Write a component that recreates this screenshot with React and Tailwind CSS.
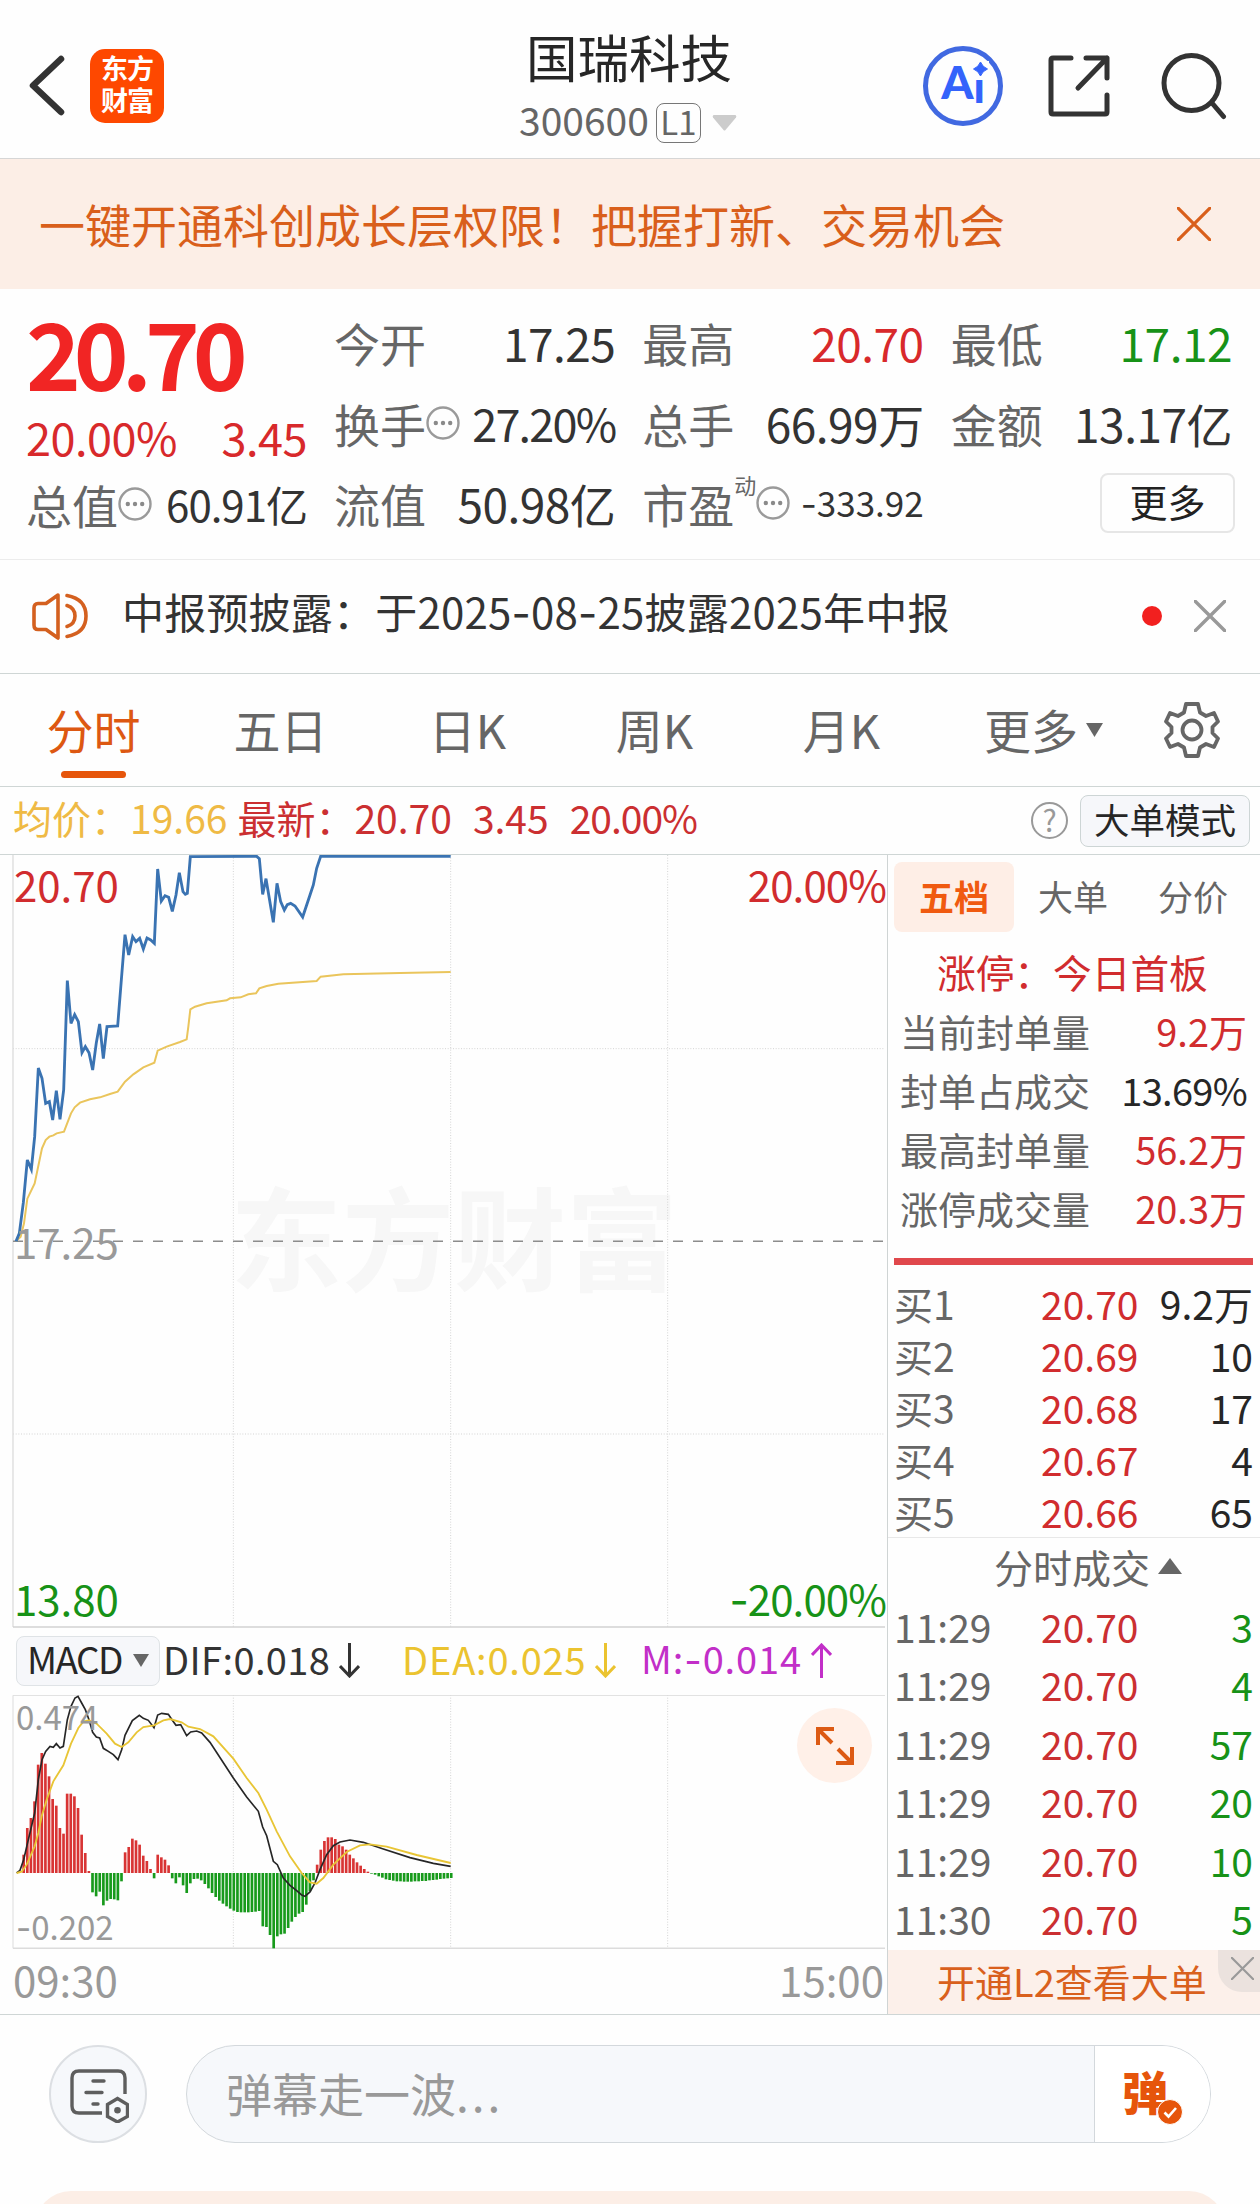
import React from 'react';
import clsx from 'clsx';

const DETAILS = [
  { label: '今开', value: '17.25' },
  { label: '最高', value: '20.70', color: 'text-[#d8292b]' },
  { label: '最低', value: '17.12', color: 'text-[#179217]' },
  { label: '换手', value: '27.20%', more: true },
  { label: '总手', value: '66.99万' },
  { label: '金额', value: '13.17亿' },
  { label: '流值', value: '50.98亿' },
];

const TABS = ['分时', '五日', '日K', '周K', '月K'];

const LIMIT_ROWS = [
  { label: '当前封单量', value: '9.2万', red: true },
  { label: '封单占成交', value: '13.69%' },
  { label: '最高封单量', value: '56.2万', red: true },
  { label: '涨停成交量', value: '20.3万', red: true },
];

const BUYS = [
  ['买1', '20.70', '9.2万'],
  ['买2', '20.69', '10'],
  ['买3', '20.68', '17'],
  ['买4', '20.67', '4'],
  ['买5', '20.66', '65'],
];

const TRADES = [
  ['11:29', '20.70', '3'],
  ['11:29', '20.70', '4'],
  ['11:29', '20.70', '57'],
  ['11:29', '20.70', '20'],
  ['11:29', '20.70', '10'],
  ['11:30', '20.70', '5'],
];

// chart data is kept in a 3x space, the svg viewBox scales it down
const PRICE = '48,1204 58,1180 70,1088 82,960 94,988 104,890 115,684 126,715 137,790 148,785 158,840 169,752 180,838 191,750 202,422 213,550 224,524 235,545 246,638 256,620 267,638 278,690 289,608 299,552 310,656 321,560 353,558 364,420 375,284 386,345 398,290 408,305 419,295 430,327 441,294 452,300 463,310 473,87 484,183 495,167 506,172 517,214 528,165 538,98 549,155 556,163 562,160 571,50 770,49 778,56 788,163 798,116 820,247 831,130 842,185 853,210 862,194 872,190 885,198 908,231 930,165 940,135 950,85 962,49 1352,49';
const AVG = '48,1204 62,1190 72,1150 82,1076 104,1030 126,925 137,900 148,890 160,886 170,880 192,875 213,820 224,802 240,788 270,778 300,772 330,762 353,755 375,725 400,703 430,682 463,668 473,632 500,620 540,606 560,598 565,560 571,508 585,500 620,490 680,481 690,475 722,472 745,463 768,460 778,445 800,438 835,431 950,423 962,410 1030,403 1200,399 1352,396';
const DIF = '50,820 60,812 71,780 85,720 104,640 115,540 126,480 137,455 150,440 160,443 169,432 180,445 190,440 202,360 213,320 225,295 234,290 245,310 256,330 267,360 278,398 289,412 299,415 310,446 325,455 340,465 354,480 365,450 375,407 397,363 418,347 430,356 445,362 462,384 473,346 485,341 505,344 517,362 528,377 542,375 560,408 572,397 590,394 605,400 630,428 700,535 740,592 775,635 788,682 800,708 820,785 832,795 850,835 870,857 890,873 905,886 915,890 930,877 945,850 960,810 980,765 1000,738 1020,727 1050,721 1090,728 1150,748 1230,774 1300,791 1352,800';
const DEA = '50,820 65,816 80,795 104,740 115,700 125,650 140,600 160,545 190,497 213,432 235,385 250,366 267,362 290,372 320,402 345,432 365,442 385,428 410,398 430,382 462,377 490,362 510,358 545,368 565,381 600,388 640,410 700,477 740,535 775,580 800,630 830,695 870,770 905,820 930,848 950,852 970,835 1000,795 1040,757 1080,737 1110,734 1160,741 1250,766 1352,790';
const BARS = [
  55, 135, 165, 215, 325, 360, 328, 290, 222, 202, 135, 118, 238, 238, 230, 195, 115, 60, 6,
  -58, -70, -56, -97, -83, -78, -79, -82, -25,
  62, 78, 103, 98, 85, 52, 36, 12, -16, 55, 47, 40, 23,
  -16, -31, -13, -37, -60, -31, -18, -17, -22, -33, -46, -60, -72, -83, -92, -100, -107, -113,
  -117, -118, -118, -118, -117, -116, -114,
  -160, -162, -186, -226, -190, -184, -182, -165, -146, -132, -122, -117, -95, -55, -22,
  25, 70, 96, 107, 107, 102, 85, 80, 70, 55, 44, 32, 22, 12, 4,
  -2, -5, -10, -14, -19, -21, -23, -25, -25, -26, -26, -26, -25, -25, -24, -24, -22, -21, -20, -18, -17, -16, -15,
];
const GRID_X = [700, 1352, 2003];

// Inter's hyphen is wide enough to read as a minus next to the figures
const Dash = () => <span className="font-[Inter]">-</span>;

const MoreDots = () => (
  <svg className="h-[34px] w-[34px] shrink-0" viewBox="0 0 34 34" fill="none">
    <circle cx="17" cy="17" r="15.5" stroke="#9a9a9a" strokeWidth="2.4" />
    <circle cx="9.8" cy="17" r="2.2" fill="#8a8a8a" />
    <circle cx="17" cy="17" r="2.2" fill="#8a8a8a" />
    <circle cx="24.2" cy="17" r="2.2" fill="#8a8a8a" />
  </svg>
);

const Cross = ({ className, width = 2 }) => (
  <svg className={className} viewBox="0 0 32 32" fill="none" stroke="currentColor" strokeWidth={width} strokeLinecap="round">
    <path d="M1 1 31 31M31 1 1 31" />
  </svg>
);

const Arrow = ({ up }) => (
  <svg className={clsx('h-[35px] w-[21px] shrink-0', up && 'rotate-180')} viewBox="0 0 21 35" fill="none" stroke="currentColor" strokeWidth="3">
    <path d="M10.5 0V33M1 23 10.5 33 20 23" />
  </svg>
);

const Header = () => (
  <header className="flex h-[159px] items-center border-b border-[#d6d6d6] pl-[28px] pr-[33px]">
    <div className="flex w-[491px] items-center pt-[13px]">
      <svg className="h-[61px] w-[37px]" viewBox="0 0 37 61" fill="none" stroke="#333" strokeWidth="6.5" strokeLinecap="round" strokeLinejoin="round">
        <path d="M33 4 5 30.5 33 57" />
      </svg>
      <div className="ml-[25px] flex h-[74px] w-[74px] flex-col items-center rounded-[15px] bg-[#fe4800] pt-[3px] text-[27px] font-bold leading-[32px] tracking-[-1px] text-white">
        <span>东方</span>
        <span>财富</span>
      </div>
    </div>
    <div className="flex flex-1 flex-col self-stretch pt-[30px]">
      <h1 className="pl-[7px] text-[51.5px] leading-none text-[#262626]">国瑞科技</h1>
      <div className="mt-[21px] flex h-[40px] items-center text-[#666]">
        <span className="pb-[7px] text-[39px] leading-none">300600</span>
        <span className="ml-[7px] flex h-[40px] w-[45px] items-center justify-center rounded-[8px] border-[1.5px] border-[#777] pb-[3px] text-[33px] leading-none">L1</span>
        <svg className="ml-[11px] h-[16px] w-[25px]" viewBox="0 0 25 16">
          <path d="M1.5 0h22q1.5 1 .5 2.5L13.5 15q-1 1-2 0L1 2.5Q0 1 1.5 0" fill="#ccc" />
        </svg>
      </div>
    </div>
    <div className="flex items-center pt-[13px]">
      <div className="flex h-[80px] w-[80px] items-center justify-center rounded-full border-[5px] border-[#4169e1] font-[Lato] text-[46px] font-black leading-none text-[#3463fb]">
        <span className="pb-[7px]">A</span>
        <span className="relative text-[44px]">
          i
          <svg className="absolute left-[-1px] top-[-3px] h-[17px] w-[17px] bg-[#fefefe]" viewBox="0 0 17 17">
            <path d="M8.5 1Q10.5 6 15.5 8Q10.5 10 8.5 15Q6.5 10 1.5 8Q6.5 6 8.5 1" fill="#3463fb" stroke="#3463fb" />
          </svg>
        </span>
      </div>
      <svg className="ml-[44px] h-[64px] w-[64px]" viewBox="0 0 64 64" fill="none" stroke="#333" strokeWidth="5" strokeLinecap="round" strokeLinejoin="round">
        <path d="M24 4H6Q4 4 4 6V58Q4 60 6 60H58Q60 60 60 58V41M39 4H60V24M60 4 31 34" />
      </svg>
      <svg className="ml-[48px] h-[68px] w-[68px]" viewBox="0 0 68 68" fill="none" stroke="#333" strokeWidth="5" strokeLinecap="round">
        <circle cx="32.5" cy="31" r="27.5" />
        <path d="M53 51 64.5 64.5" />
      </svg>
    </div>
  </header>
);

const Quote = () => (
  <section className="flex h-[271px] gap-[29px] border-b border-[#ececec] pl-[28px] pr-[28px] pt-[13px] text-[46px] leading-none">
    <div className="w-[279px] text-[#d8292b]">
      <div className="-ml-[2px] flex h-[97px] items-center text-[93px] font-bold tracking-[-7px] text-[#f12524]">20.70</div>
      <div className="-ml-[2px] flex h-[75px] items-center justify-between pb-[1px] text-[45px] tracking-[-0.5px]">
        <span>20.00%</span>
        <span>3.45</span>
      </div>
      <div className="flex h-[59px] items-center">
        <span className="-ml-[2px] text-[#666]">总值</span>
        <MoreDots />
        <span className="ml-auto text-[42px] tracking-[-1px] text-[#333]">60.91亿</span>
      </div>
    </div>
    <div className="grid flex-1 grid-cols-3 content-start gap-x-[29px]">
      {DETAILS.map(({ label, value, color, more }) => (
        <div key={label} className="flex h-[80.5px] items-center whitespace-nowrap">
          <span className="-ml-[2px] text-[#666]">{label}</span>
          {more && <MoreDots />}
          <span className={clsx('ml-auto', color || 'text-[#333]', more ? 'text-[45px] tracking-[-1.8px]' : 'tracking-[-0.5px]')}>{value}</span>
        </div>
      ))}
      <div className="flex h-[80.5px] items-center">
        <span className="-ml-[2px] text-[#666]">市盈</span>
        <span className="self-start pt-[10px] text-[22px] text-[#666]">动</span>
        <MoreDots />
        <span className="ml-auto text-[35px] text-[#333]"><Dash />333.92</span>
      </div>
      <div className="flex h-[80.5px] items-center">
        <button className="-mr-[3px] ml-auto flex h-[60px] w-[135px] items-center justify-center rounded-[8px] border-2 border-[#e6e6e6] pb-[5px] text-[38px] text-[#222]">更多</button>
      </div>
    </div>
  </section>
);

const Notice = () => (
  <div className="flex h-[114px] items-center border-b border-[#cfd6d5] pb-[2px] pl-[32px] pr-[34px]">
    <svg className="h-[48px] w-[56px]" viewBox="0 0 56 48" fill="none" stroke="#d4601f" strokeWidth="3.6" strokeLinecap="round" strokeLinejoin="round">
      <path d="M26 3 14 11.5H6Q2 11.5 2 16V33Q2 37.5 6 37.5H14L26 46Z" />
      <path d="M35 13.5Q43 16 43 24T35 34.5M35 3.5Q54 7 54 24T35 44.5" />
    </svg>
    <span className="ml-[34px] pb-[7px] text-[42px] leading-none tracking-[0.2px] text-[#333]">中报预披露：于2025<Dash />08<Dash />25披露2025年中报</span>
    <span className="ml-auto h-[20px] w-[20px] rounded-full bg-[#f2201f]" />
    <Cross className="ml-[32px] h-[32px] w-[32px] text-[#999]" width={3.4} />
  </div>
);

const Tabs = () => (
  <nav className="flex h-[113px] items-center border-b border-[#cfd6d5] text-[47px] leading-none text-[#666]">
    {TABS.map((tab, i) => (
      <div key={tab} className={clsx('relative flex h-full w-[187px] items-center justify-center pb-[4px]', i === 0 && 'text-[#dd5812]')}>
        {tab}
        {i === 0 && <span className="absolute bottom-[8px] h-[7px] w-[65px] rounded-full bg-[#e6550b]" />}
      </div>
    ))}
    <span className="ml-[49px] pb-[4px]">更多</span>
    <svg className="ml-[8px] h-[14px] w-[17px]" viewBox="0 0 17 14"><path d="M0 0H17L8.5 14Z" fill="#666" /></svg>
    <svg className="ml-[61px] h-[58px] w-[56px]" viewBox="0 0 56 58" fill="none" stroke="#666" strokeWidth="3.8" strokeLinejoin="round">
      <path d="M22 3H34L36 11.5 42 15 50 12 54 20.5 48.5 26V32L54 37.5 50 46 42 43 36 46.5 34 55H22L20 46.5 14 43 6 46 2 37.5 7.5 32V26L2 20.5 6 12 14 15 20 11.5Z" />
      <circle cx="28" cy="29" r="9.5" />
    </svg>
  </nav>
);

const InfoBar = () => (
  <div className="flex h-[68px] items-center border-b border-[#cfd6d5] pl-[13px] pr-[10px] text-[39px] leading-none">
    <span className="pb-[7px] text-[#efba45]">均价：19.66</span>
    <div className="ml-[10px] flex gap-[21px] pb-[7px] text-[#cb2f31]">
      <span>最新：20.70</span>
      <span>3.45</span>
      <span className="tracking-[-1px]">20.00%</span>
    </div>
    <span className="ml-auto flex h-[37px] w-[37px] items-center justify-center rounded-full border-[2.5px] border-[#999] pb-[3px] text-[30px] text-[#999]">?</span>
    <button className="ml-[12px] flex h-[52px] w-[170px] items-center justify-center rounded-[8px] border border-[#cdd5d5] bg-[#f6f7fa] pb-[4px] text-[35.5px] text-[#262626]">大单模式</button>
  </div>
);

const PriceChart = () => (
  <div className="relative h-[773px] text-[42px] leading-none">
    <div className="absolute left-[230px] top-[323px] text-[112px] font-bold text-[#f7f7f7]">东方财富</div>
    <svg className="absolute inset-0 h-[773px] w-[887px]" viewBox="0 45 2661 2319" fill="none">
      <g stroke="#d4d4d4" strokeWidth="3" strokeDasharray="3 5">
        {GRID_X.map((x) => <path key={x} d={`M${x} 45V2361`} />)}
        <path d="M39 626H2655M39 1782H2655" />
      </g>
      <path d="M39 45V2361" stroke="#dcdcdc" strokeWidth="4" />
      <path d="M39 2361H2655" stroke="#d2d2d2" strokeWidth="5" />
      <path d="M39 1204H2655" stroke="#8c8c8c" strokeWidth="4.5" strokeDasharray="30 30" />
      <polyline points={AVG} stroke="#eac55c" strokeWidth="6" />
      <polyline points={PRICE} stroke="#3a73b2" strokeWidth="8.5" />
    </svg>
    <span className="absolute left-[14px] top-[8px] text-[#d12c2e]">20.70</span>
    <span className="absolute right-[1px] top-[8px] tracking-[-0.9px] text-[#d12c2e]">20.00%</span>
    <span className="absolute left-[14px] top-[365px] text-[#999]">17.25</span>
    <span className="absolute left-[14px] top-[722px] text-[#179217]">13.80</span>
    <span className="absolute right-[1px] top-[722px] tracking-[-0.9px] text-[#179217]"><Dash />20.00%</span>
  </div>
);

const MacdBar = () => (
  <div className="flex h-[67px] items-center pb-[2px] pl-[16px] text-[38px] leading-none text-[#333]">
    <button className="flex h-[50px] w-[144px] items-center rounded-[8px] border border-[#dfe3e6] bg-[#f6f7fa] pl-[10px] text-[#262626]">
      <span className="pb-[4px] text-[37px] tracking-[-1.6px]">MACD</span>
      <svg className="ml-[11px] h-[13px] w-[16px] shrink-0" viewBox="0 0 16 13"><path d="M0 0H16L8 13Z" fill="#666" /></svg>
    </button>
    <div className="flex w-[240px] items-center gap-[9px] pl-[3px] tracking-[0.4px]">
      <span className="pb-[4px]">DIF:0.018</span><Arrow />
    </div>
    <div className="flex w-[241px] items-center gap-[9px] pl-[2px] tracking-[0.8px] text-[#ebc32f]">
      <span className="pb-[4px]">DEA:0.025</span><Arrow />
    </div>
    <div className="flex items-center gap-[9px] tracking-[0.9px] text-[#c22fc8]">
      <span className="pb-[4px]">M:<Dash />0.014</span><Arrow up />
    </div>
  </div>
);

const MacdChart = () => (
  <div className="relative h-[254px] text-[33px] leading-none text-[#999]">
    <svg className="absolute inset-0 h-[254px] w-[887px]" viewBox="0 286 2661 762" fill="none">
      <g stroke="#d4d4d4" strokeWidth="3" strokeDasharray="3 5">
        {GRID_X.map((x) => <path key={x} d={`M${x} 286V1046`} />)}
      </g>
      <path d="M39 1046V287H2655" stroke="#dcdcdc" strokeWidth="3" />
      <path d="M39 1046H2655" stroke="#dcdcdc" strokeWidth="5" />
      {BARS.map((v, i) => (
        <rect key={i} x={67 + i * 10.87} y={v > 0 ? 820 - v : 820} width="8" height={Math.abs(v)} fill={v > 0 ? '#d83434' : '#179a1b'} />
      ))}
      <polyline points={DIF} stroke="#262626" strokeWidth="5" />
      <polyline points={DEA} stroke="#e8c535" strokeWidth="5.5" />
    </svg>
    <span className="absolute left-[16px] top-[5px]">0.474</span>
    <span className="absolute left-[16px] top-[215px]"><Dash />0.202</span>
    <span className="absolute left-[797px] top-[13px] flex h-[75px] w-[75px] items-center justify-center rounded-full bg-[#fff0e8]">
      <svg className="h-[38px] w-[38px]" viewBox="0 0 38 38" fill="none" stroke="#dc5a14" strokeWidth="4">
        <path d="M2 18V2H18M2 2 16 16M36 20V36H20M36 36 22 22" />
      </svg>
    </span>
  </div>
);

const OrderPanel = () => (
  <aside className="flex w-[373px] flex-col border-l border-[#cfd4d4] leading-none">
    <div className="flex pl-[6px] pt-[7px] text-[35px] text-[#666]">
      <div className="flex h-[70px] w-[120px] items-center justify-center rounded-[8px] bg-[#feeee6] pb-[3px] font-bold text-[#f05a10]">五档</div>
      <div className="flex h-[70px] w-[118px] items-center justify-center pb-[3px]">大单</div>
      <div className="flex h-[70px] w-[122px] items-center justify-center pb-[3px]">分价</div>
    </div>
    <div className="mt-[10px] flex h-[59px] items-center pl-[49px] text-[38.7px] text-[#d12c2e]">涨停：今日首板</div>
    {LIMIT_ROWS.map(({ label, value, red }) => (
      <div key={label} className="flex h-[59px] items-center justify-between pl-[12px] pr-[13px] text-[38px]">
        <span className="text-[#666]">{label}</span>
        <span className={red ? 'text-[#d12c2e]' : 'tracking-[-0.7px] text-[#262626]'}>{value}</span>
      </div>
    ))}
    <div className="ml-[6px] mt-[21px] h-[7px] w-[359px] bg-[#e0484c]" />
    <div className="mt-[12px]">
      {BUYS.map(([label, price, vol]) => (
        <div key={label} className="flex h-[52px] items-center pl-[6px] pr-[7px] text-[39px]">
          <span className="w-[147px] text-[#666]">{label}</span>
          <span className="text-[#d12c2e]">{price}</span>
          <span className="ml-auto text-[#262626]">{vol}</span>
        </div>
      ))}
    </div>
    <div className="flex h-[60px] items-center justify-center gap-[8px] border-t border-[#e8e8e8] pl-[28px] text-[39px] text-[#666]">
      <span className="pb-[3px]">分时成交</span>
      <svg className="-mt-[4px] h-[16px] w-[24px]" viewBox="0 0 24 16"><path d="M12 0 24 16H0Z" fill="#666" /></svg>
    </div>
    {TRADES.map(([time, price, vol], i) => (
      <div key={i} className="flex h-[58.5px] items-center pl-[6px] pr-[7px] text-[39px]">
        <span className="w-[147px] text-[#666]">{time}</span>
        <span className="text-[#cb2f31]">{price}</span>
        <span className="ml-auto text-[#179217]">{vol}</span>
      </div>
    ))}
    <div className="relative mt-[2px] flex flex-1 items-center bg-[#fcf0ea] pb-[3px] pl-[49px] text-[38px] text-[#d9601d]">
      开通L2查看大单
      <span className="absolute right-0 top-0 flex h-[42px] w-[42px] items-center justify-center rounded-bl-[24px] bg-[#ebe2de] pb-[5px] pl-[6px]">
        <Cross className="h-[23px] w-[23px] text-[#999]" width={3} />
      </span>
    </div>
  </aside>
);

const CommentBar = () => (
  <footer className="flex flex-col border-t border-[#cfd6d5] pt-[30px]">
    <div className="flex pl-[49px]">
      <div className="flex h-[98px] w-[98px] items-center justify-center rounded-full border-2 border-[#dcdfe3] bg-[#f6f8fb]">
        <svg className="h-[58px] w-[62px]" viewBox="0 0 62 58" fill="none" stroke="#5e5e5e" strokeWidth="3.4">
          <path d="M35 48H12Q5 48 5 41V13Q5 6 12 6H51Q58 6 58 13V29" />
          <path d="M26 16H37M19 27.500H35M26 39H31" strokeLinecap="round" />
          <path d="M50.500 33.500 60.500 39.500V51.500L50.500 57 40.500 51.500V39.500Z" />
          <circle cx="50.500" cy="45.300" r="3.300" fill="#5e5e5e" stroke="none" />
        </svg>
      </div>
      <div className="ml-[39px] flex h-[98px] w-[1025px] items-center overflow-hidden rounded-full border-[1.5px] border-[#d3d8dc] bg-[#f6f8fb]">
        <span className="flex-1 pb-[4px] pl-[39px] text-[46px] leading-none text-[#999]">弹幕走一波<span className="tracking-[3px]">...</span></span>
        <div className="relative flex h-full w-[116px] items-center border-l border-[#d3d8dc] bg-white pb-[8px] pl-[27px] text-[46px] font-black leading-none text-[#e6550b]">
          弹
          <svg className="absolute left-[62px] top-[53px] h-[26px] w-[26px]" viewBox="0 0 26 26" fill="none">
            <circle cx="13" cy="13" r="12.5" fill="#e6550b" stroke="#fff" />
            <path d="M7.5 13.5 11.5 17.5 19 9" stroke="#fff" strokeWidth="2.6" />
          </svg>
        </div>
      </div>
    </div>
    <div className="mx-[35px] mt-[48px] h-[13px] overflow-hidden">
      <div className="h-[60px] rounded-t-[36px] bg-[#fceee6]" />
    </div>
  </footer>
);

export default function App() {
  return (
    <div className="flex h-[2204px] w-[1260px] flex-col overflow-hidden whitespace-nowrap bg-[#fefefe] font-['Noto_Sans_CJK_SC',sans-serif]">
      <Header />
      <div className="flex h-[130px] items-center justify-between bg-[#fceee6] pl-[39px] pr-[49px] text-[#d95f1b]">
        <span className="pb-[3px] text-[46px] leading-none">一键开通科创成长层权限！把握打新、交易机会</span>
        <Cross className="h-[34px] w-[34px]" width={3} />
      </div>
      <Quote />
      <Notice />
      <Tabs />
      <InfoBar />
      <main className="flex h-[1159px]">
        <div className="w-[887px]">
          <PriceChart />
          <MacdBar />
          <MacdChart />
          <div className="flex h-[61px] items-center justify-between pb-[2px] pl-[13px] pr-[3px] text-[42px] leading-none text-[#999]">
            <span>09:30</span>
            <span>15:00</span>
          </div>
        </div>
        <OrderPanel />
      </main>
      <CommentBar />
    </div>
  );
}
